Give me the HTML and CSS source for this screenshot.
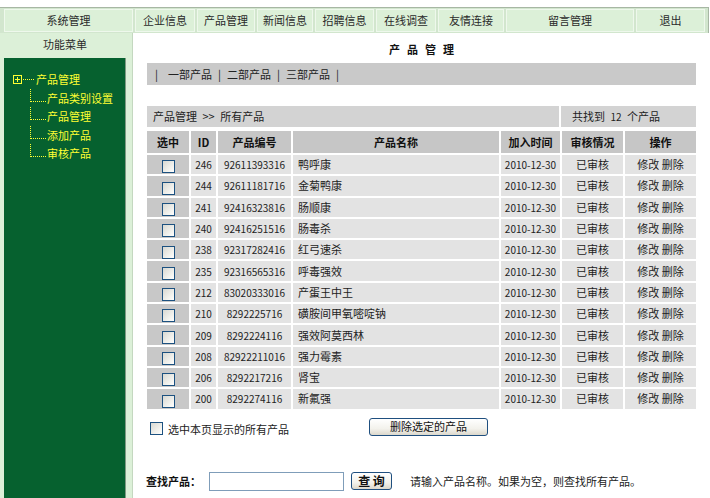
FILE: index.html
```html
<!DOCTYPE html>
<html lang="zh-CN">
<head>
<meta charset="utf-8">
<title>产品管理</title>
<link rel="stylesheet" href="styles.css">
</head>
<body>
<div class="page">
  <nav class="topnav">
    <a class="nav-cell c1">系统管理</a>
    <a class="nav-cell c2">企业信息</a>
    <a class="nav-cell c3">产品管理</a>
    <a class="nav-cell c4">新闻信息</a>
    <a class="nav-cell c5">招聘信息</a>
    <a class="nav-cell c6">在线调查</a>
    <a class="nav-cell c7">友情连接</a>
    <a class="nav-cell c8">留言管理</a>
    <a class="nav-cell c9">退出</a>
  </nav>
  <div class="layout">
    <aside class="sidebar">
      <div class="side-title">功能菜单</div>
      <div class="side-panel">
        <ul class="tree">
          <li class="tree-root">
            <svg class="plus-box" width="9" height="9" viewBox="0 0 9 9"><rect x="0.5" y="0.5" width="8" height="8" fill="none" stroke="#ffff33"/><path d="M2 4.5H7M4.5 2V7" stroke="#ffff33" fill="none"/></svg>
            <span class="dots-h"></span><span>产品管理</span>
          </li>
          <li class="tree-child"><span class="elbow"></span><span>产品类别设置</span></li>
          <li class="tree-child"><span class="elbow"></span><span>产品管理</span></li>
          <li class="tree-child"><span class="elbow"></span><span>添加产品</span></li>
          <li class="tree-child"><span class="elbow"></span><span>审核产品</span></li>
        </ul>
      </div>
    </aside>
    <main class="main">
      <h1 class="title">产品管理</h1>
      <div class="subnav">
        <span class="sep first">|</span><a>一部产品</a><span class="sep">|</span><a>二部产品</a><span class="sep">|</span><a>三部产品</a><span class="sep">|</span>
      </div>
      <div class="crumbs">
        <div class="crumb-left">产品管理&ensp;&gt;&gt;&ensp;所有产品</div>
        <div class="crumb-right">共找到&ensp;<span class="num">12</span>&ensp;个产品</div>
      </div>
      <table class="list">
        <colgroup>
          <col class="k-sel"><col class="k-id"><col class="k-code"><col class="k-name"><col class="k-date"><col class="k-stat"><col class="k-op">
        </colgroup>
        <thead>
          <tr><th>选中</th><th>ID</th><th>产品编号</th><th>产品名称</th><th>加入时间</th><th>审核情况</th><th>操作</th></tr>
        </thead>
        <tbody>
          <tr><td class="sel"><input type="checkbox" class="cb"></td><td class="num">246</td><td class="num">92611393316</td><td class="name">鸭呼康</td><td class="num">2010-12-30</td><td>已审核</td><td>修改 删除</td></tr>
          <tr><td class="sel"><input type="checkbox" class="cb"></td><td class="num">244</td><td class="num">92611181716</td><td class="name">金菊鸭康</td><td class="num">2010-12-30</td><td>已审核</td><td>修改 删除</td></tr>
          <tr><td class="sel"><input type="checkbox" class="cb"></td><td class="num">241</td><td class="num">92416323816</td><td class="name">肠顺康</td><td class="num">2010-12-30</td><td>已审核</td><td>修改 删除</td></tr>
          <tr><td class="sel"><input type="checkbox" class="cb"></td><td class="num">240</td><td class="num">92416251516</td><td class="name">肠毒杀</td><td class="num">2010-12-30</td><td>已审核</td><td>修改 删除</td></tr>
          <tr><td class="sel"><input type="checkbox" class="cb"></td><td class="num">238</td><td class="num">92317282416</td><td class="name">红弓速杀</td><td class="num">2010-12-30</td><td>已审核</td><td>修改 删除</td></tr>
          <tr><td class="sel"><input type="checkbox" class="cb"></td><td class="num">235</td><td class="num">92316565316</td><td class="name">呼毒强效</td><td class="num">2010-12-30</td><td>已审核</td><td>修改 删除</td></tr>
          <tr><td class="sel"><input type="checkbox" class="cb"></td><td class="num">212</td><td class="num">83020333016</td><td class="name">产蛋王中王</td><td class="num">2010-12-30</td><td>已审核</td><td>修改 删除</td></tr>
          <tr><td class="sel"><input type="checkbox" class="cb"></td><td class="num">210</td><td class="num">8292225716</td><td class="name">磺胺间甲氧嘧啶钠</td><td class="num">2010-12-30</td><td>已审核</td><td>修改 删除</td></tr>
          <tr><td class="sel"><input type="checkbox" class="cb"></td><td class="num">209</td><td class="num">8292224116</td><td class="name">强效阿莫西林</td><td class="num">2010-12-30</td><td>已审核</td><td>修改 删除</td></tr>
          <tr><td class="sel"><input type="checkbox" class="cb"></td><td class="num">208</td><td class="num">82922211016</td><td class="name">强力霉素</td><td class="num">2010-12-30</td><td>已审核</td><td>修改 删除</td></tr>
          <tr><td class="sel"><input type="checkbox" class="cb"></td><td class="num">206</td><td class="num">8292217216</td><td class="name">肾宝</td><td class="num">2010-12-30</td><td>已审核</td><td>修改 删除</td></tr>
          <tr><td class="sel"><input type="checkbox" class="cb"></td><td class="num">200</td><td class="num">8292274116</td><td class="name">新氟强</td><td class="num">2010-12-30</td><td>已审核</td><td>修改 删除</td></tr>
        </tbody>
      </table>
      <div class="actions">
        <label class="select-all"><input type="checkbox" class="cb"><span>选中本页显示的所有产品</span></label>
        <button type="button" class="btn btn-del">删除选定的产品</button>
      </div>
      <form class="search">
        <span class="search-label">查找产品：</span>
        <input type="text" class="search-input">
        <button type="button" class="btn btn-query">查 询</button>
        <span class="hint">请输入产品名称。如果为空，则查找所有产品。</span>
      </form>
    </main>
  </div>
</div>
</body>
</html>
```
FILE: styles.css
```css
* { box-sizing: border-box; }
html, body { margin: 0; padding: 0; background: #fff; }
body {
  font-family: "Noto Sans CJK SC", "Liberation Sans", sans-serif;
  font-size: 11px;
  color: #222;
}
a { color: inherit; text-decoration: none; }

.page {
  min-height: 100vh;
  display: flex;
  flex-direction: column;
  padding-top: 7px;
}

/* top navigation */
.topnav {
  display: flex;
  gap: 2px;
  width: 709px;
  height: 26px;
  padding: 1px 3px 0 4px;
  background: #d2e6ce;
  border-top: 1px solid #a7b7a4;
  border-right: 1px solid #a7b7a4;
}
.nav-cell {
  height: 23px;
  line-height: 21px;
  text-align: center;
  background: #dcf0d8;
  border: 1px solid #eef8ec;
  color: #2a2a2a;
}
.c1 { width: 129px; }
.c2 { width: 60px; }
.c3 { width: 58px; }
.c4 { width: 56px; }
.c5 { width: 59px; }
.c6 { width: 60px; }
.c7 { width: 66px; }
.c8 { width: 128px; }
.c9 { width: 69px; }

/* layout */
.layout { flex: 1; display: flex; }

.sidebar {
  width: 133px;
  flex: none;
  display: flex;
  flex-direction: column;
  background: #dcf0d8;
  border-right: 1px solid #c4d8c0;
  padding-left: 4px;
}
.side-title {
  height: 25px;
  line-height: 22px;
  text-align: center;
  padding-right: 6px;
  color: #2a2a2a;
}
.side-panel {
  flex: 1;
  width: 122px;
  background: #06612f;
  border-right: 1px solid #7f9a84;
}
.tree {
  list-style: none;
  margin: 0;
  padding: 12px 0 0 9px;
  color: #ffff33;
}
.tree li {
  display: flex;
  align-items: flex-start;
  height: 18.6px;
  line-height: 18.6px;
  white-space: nowrap;
}
.plus-box { margin-top: 5px; flex: none; }
.dots-h {
  width: 11px;
  height: 1px;
  margin: 9px 2px 0 1px;
  border-top: 1px dotted #ffff33;
}
.elbow {
  width: 16px;
  height: 13px;
  margin: 0 1px 0 17px;
  border-left: 1px dotted #ffff33;
  border-bottom: 1px dotted #ffff33;
  flex: none;
}

/* main */
.main {
  flex: 1;
  padding: 0 14px;
}
.title {
  margin: 10px 0 0;
  height: 12px;
  line-height: 12px;
  font-size: 11px;
  font-weight: bold;
  text-align: center;
  letter-spacing: 7px;
  padding-left: 7px;
  color: #111;
}
.subnav {
  margin-top: 8px;
  height: 22px;
  line-height: 22px;
  background: #c9c9c9;
  padding-left: 2px;
  display: flex;
  color: #222;
}
.sep {
  display: inline-block;
  width: 15px;
  text-align: center;
}
.sep.first { margin-right: 4px; }

.crumbs {
  margin-top: 21px;
  display: flex;
  gap: 2px;
  height: 21px;
  line-height: 21px;
}
.crumb-left {
  flex: 1;
  background: #d3d3d3;
  padding-left: 6px;
}
.crumb-right {
  width: 135px;
  background: #d3d3d3;
  padding-left: 11px;
}

.list {
  table-layout: fixed;
  border-collapse: separate;
  border-spacing: 2px;
  width: 553px;
  margin: 2px -2px 0;
}
.k-sel { width: 42px; }
.k-id { width: 25px; }
.k-code { width: 73px; }
.k-name { width: 206px; }
.k-date { width: 59px; }
.k-stat { width: 61px; }
.k-op { width: 71px; }

.list th {
  height: 22px;
  padding: 0;
  background: #c6c6c6;
  font-weight: bold;
  color: #111;
  text-align: center;
}
.list td {
  height: 19.3px;
  padding: 0;
  background: #e3e3e3;
  text-align: center;
  line-height: 15px;
  white-space: nowrap;
  color: #222;
}
.list td.sel { background: #c8c8c8; padding-top: 2px; }
.list td.name { text-align: left; padding-left: 5px; }
.num { font-size: 10px; }

.cb {
  -webkit-appearance: none;
  appearance: none;
  width: 13px;
  height: 13px;
  margin: 0;
  border: 1px solid #1c5180;
  background: linear-gradient(135deg, #d8d8d2 0%, #f4f4f0 70%, #ffffff 100%);
  vertical-align: middle;
}

.actions {
  margin-top: 6px;
  display: grid;
  grid-template-columns: 222px auto;
  align-items: center;
  height: 18px;
}
.select-all {
  display: flex;
  align-items: center;
  gap: 5px;
  padding-left: 3px;
  padding-top: 4px;
}
.btn {
  font-family: inherit;
  font-size: 11px;
  color: #111;
  border: 1px solid #1f4f7f;
  border-radius: 3px;
  background: linear-gradient(#ffffff 0%, #f3f2ec 60%, #dcd8cc 100%);
  padding: 0;
  cursor: pointer;
}
.btn-del {
  width: 119px;
  height: 18px;
  line-height: 15px;
}

.search {
  margin: 37px 0 0 -1px;
  display: flex;
  align-items: center;
  height: 19px;
}
.search-label {
  width: 63px;
  font-weight: bold;
  color: #111;
}
.search-input {
  width: 135px;
  height: 19px;
  border: 1px solid #7f9db9;
  background: #fff;
  margin: 0;
  padding: 0 2px;
}
.btn-query {
  margin-left: 7px;
  width: 41px;
  height: 18px;
  font-size: 12px;
  font-weight: bold;
  line-height: 14px;
}
.hint {
  margin-left: 18px;
  color: #222;
}
```
